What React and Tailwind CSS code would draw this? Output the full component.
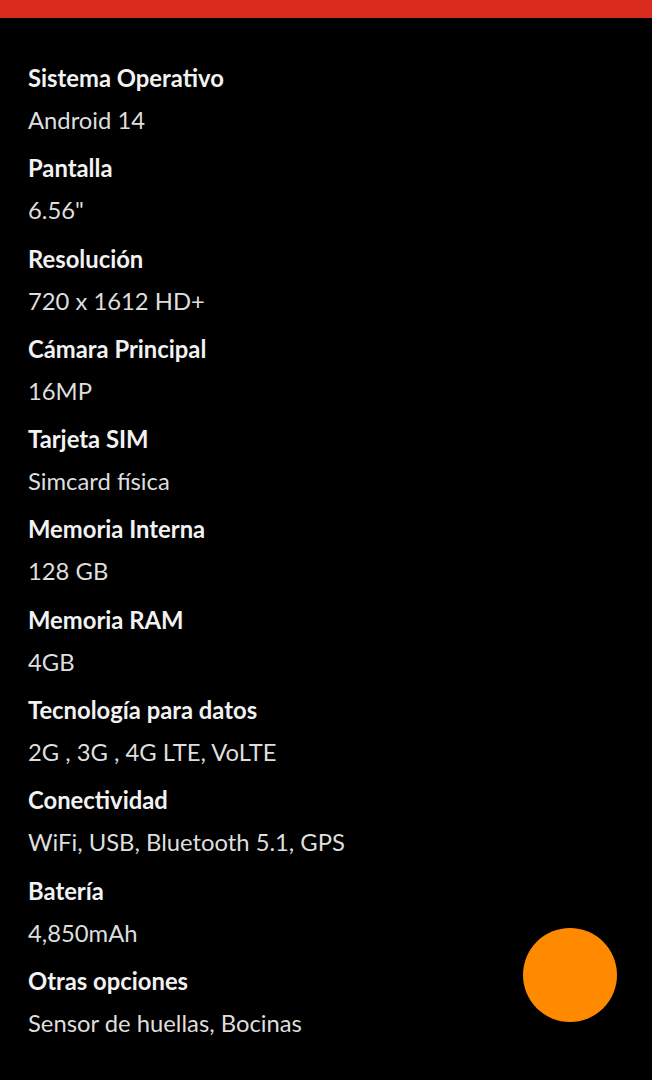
import React from "react";

const specs = [
  { label: "Sistema Operativo", value: "Android 14" },
  { label: "Pantalla", value: '6.56"' },
  { label: "Resolución", value: "720 x 1612 HD+" },
  { label: "Cámara Principal", value: "16MP" },
  { label: "Tarjeta SIM", value: "Simcard física" },
  { label: "Memoria Interna", value: "128 GB" },
  { label: "Memoria RAM", value: "4GB" },
  { label: "Tecnología para datos", value: "2G , 3G , 4G LTE, VoLTE" },
  { label: "Conectividad", value: "WiFi, USB, Bluetooth 5.1, GPS" },
  { label: "Batería", value: "4,850mAh" },
  { label: "Otras opciones", value: "Sensor de huellas, Bocinas" },
];

export default function App() {
  return (
    <div className="relative min-h-[1080px] w-full bg-black font-['Lato',sans-serif]">
      {/* top accent bar */}
      <div className="h-[18px] w-full bg-[#d92c1f]" />

      <div className="flex flex-col gap-[6.3px] px-[28px] pt-[39px]">
        {specs.map((item, key) => (
          <div key={key} className="flex flex-col">
            <div className="text-[23.8px] font-bold leading-[42px] text-[#f2f2f2]">
              {item.label}
            </div>
            <div className="text-[23.8px] font-normal leading-[42px] text-[#dedede]">
              {item.value}
            </div>
          </div>
        ))}
      </div>

      {/* floating button */}
      <div className="fixed bottom-[58px] right-[35px] h-[94px] w-[94px] rounded-full bg-[#ff8a00]" />
    </div>
  );
}
